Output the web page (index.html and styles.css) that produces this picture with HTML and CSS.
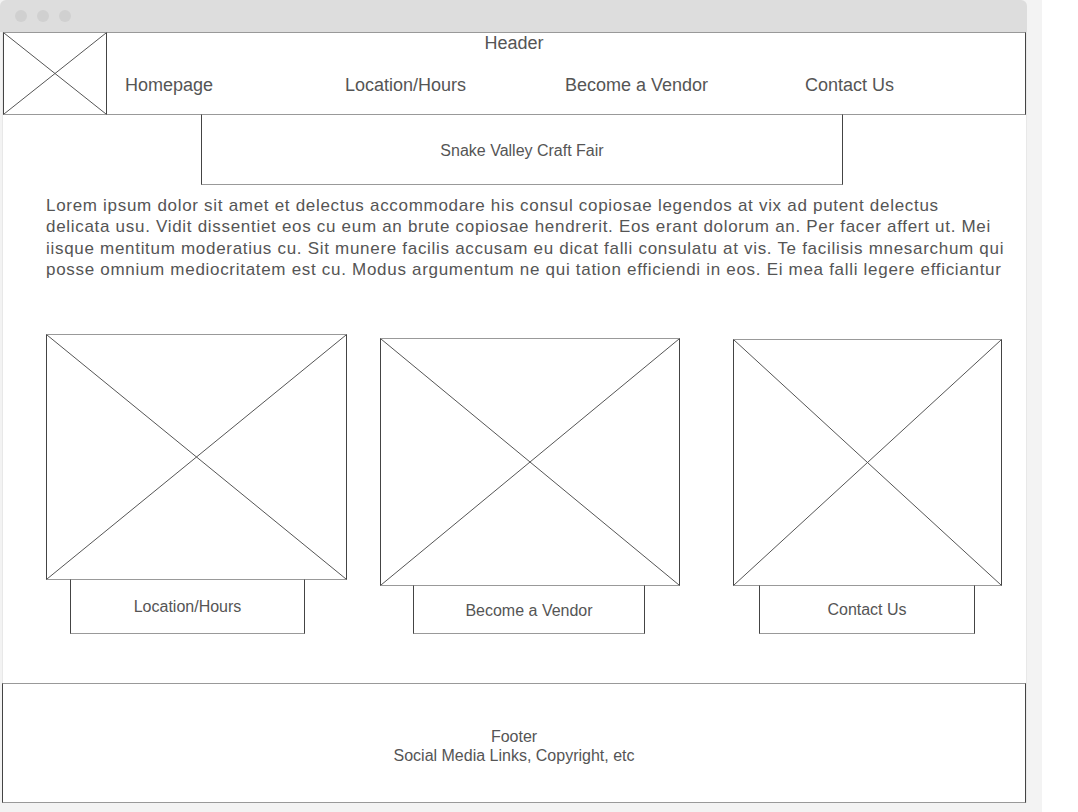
FILE: index.html
```html
<!DOCTYPE html>
<html lang="en">

<head>
  <meta charset="UTF-8" />
  <title>Snake Valley Craft Fair - Wireframe</title>
  <link rel="stylesheet" href="styles.css">
</head>

<body>

  <div class="backdrop">
    <div class="window">
      <div class="titlebar">
        <span class="dot"></span>
        <span class="dot"></span>
        <span class="dot"></span>
      </div>

      <div class="window-body">
        <div class="header">
          <div class="logo">
            <svg class="cross" viewBox="0 0 100 100" preserveAspectRatio="none">
              <line x1="0" y1="0" x2="100" y2="100" />
              <line x1="100" y1="0" x2="0" y2="100" />
            </svg>
          </div>
          <div class="header-main">
            <div class="header-title">Header</div>
            <div class="nav-links">
              <a href="#">Homepage</a>
              <a href="#">Location/Hours</a>
              <a href="#">Become a Vendor</a>
              <a href="#">Contact Us</a>
            </div>
          </div>
        </div>

        <div class="main-content">
          <div class="site-title">Snake Valley Craft Fair</div>

          <p class="intro">
            Lorem ipsum dolor sit amet et delectus accommodare his consul copiosae legendos at vix ad putent delectus<br>
            delicata usu. Vidit dissentiet eos cu eum an brute copiosae hendrerit. Eos erant dolorum an. Per facer affert ut. Mei<br>
            iisque mentitum moderatius cu. Sit munere facilis accusam eu dicat falli consulatu at vis. Te facilisis mnesarchum qui<br>
            posse omnium mediocritatem est cu. Modus argumentum ne qui tation efficiendi in eos. Ei mea falli legere efficiantur
          </p>

          <div class="cards">
            <div class="card card-location">
              <div class="card-img">
                <svg class="cross" viewBox="0 0 100 100" preserveAspectRatio="none">
                  <line x1="0" y1="0" x2="100" y2="100" />
                  <line x1="100" y1="0" x2="0" y2="100" />
                </svg>
              </div>
              <a class="card-label" href="#">Location/Hours</a>
            </div>

            <div class="card card-vendor">
              <div class="card-img">
                <svg class="cross" viewBox="0 0 100 100" preserveAspectRatio="none">
                  <line x1="0" y1="0" x2="100" y2="100" />
                  <line x1="100" y1="0" x2="0" y2="100" />
                </svg>
              </div>
              <a class="card-label" href="#">Become a Vendor</a>
            </div>

            <div class="card card-contact">
              <div class="card-img">
                <svg class="cross" viewBox="0 0 100 100" preserveAspectRatio="none">
                  <line x1="0" y1="0" x2="100" y2="100" />
                  <line x1="100" y1="0" x2="0" y2="100" />
                </svg>
              </div>
              <a class="card-label" href="#">Contact Us</a>
            </div>
          </div>
        </div>

        <footer class="footer">
          <div>Footer</div>
          <div>Social Media Links, Copyright, etc</div>
        </footer>
      </div>
    </div>
  </div>

</body>

</html>
```

FILE: styles.css
```css
body {
  font-family: 'Liberation Sans', Arial, sans-serif;
  color: #555;
  background: #fff;
  margin: 0;
  padding: 0;
}

a {
  color: #555;
  text-decoration: none;
}

.backdrop {
  width: 1042px;
  height: 812px;
  background: #f3f3f3;
}

.window {
  width: 1028px;
}

.titlebar {
  height: 32px;
  width: 1027px;
  background: #dddddd;
  border-radius: 6px 6px 0 0;
  display: flex;
  align-items: center;
  gap: 10px;
  padding-left: 15px;
  box-sizing: border-box;
}

.dot {
  width: 12px;
  height: 12px;
  border-radius: 50%;
  background: #d0d0d0;
}

.window-body {
  margin-left: 2px;
  width: 1025px;
  background: #fff;
  border-left: 1px solid #e8e8e8;
  border-right: 1px solid #e8e8e8;
  box-sizing: border-box;
}

/* boxes of the wireframe: light top/bottom, dark sides */
.header,
.logo,
.site-title,
.card-img,
.card-label,
.footer {
  border: 1px solid;
  border-color: #999 #444 #999 #444;
  box-sizing: border-box;
}

.header {
  display: flex;
  height: 83px;
}

.logo {
  width: 104px;
  margin: -1px 0 -1px -1px;
  height: 83px;
}

.cross {
  display: block;
  width: 100%;
  height: 100%;
}

.cross line {
  stroke: #555;
  stroke-width: 1;
  vector-effect: non-scaling-stroke;
}

.header-main {
  flex: 1;
  position: relative;
}

.header-title {
  position: absolute;
  left: -104px;
  right: 0;
  top: 0;
  text-align: center;
  font-size: 18px;
}

.nav-links {
  display: grid;
  grid-template-columns: 220px 220px 240px auto;
  padding: 42px 0 0 18px;
  font-size: 18px;
}

.main-content {
  height: 569px;
}

.site-title {
  width: 642px;
  height: 71px;
  margin: -1px 0 0 198px;
  padding-top: 2px;
  display: flex;
  align-items: center;
  justify-content: center;
  font-size: 16px;
}

.intro {
  margin: 10px 0 0 43px;
  font-size: 17px;
  letter-spacing: 0.7px;
  line-height: 21.3px;
  white-space: nowrap;
}

.cards {
  display: flex;
  align-items: flex-start;
  padding-left: 43px;
  margin-top: 54px;
}

.card {
  display: flex;
  flex-direction: column;
}

.card-img {
  height: 246px;
}

.card-label {
  display: flex;
  align-items: center;
  justify-content: center;
  margin-top: -1px;
  font-size: 16px;
}

.card-location .card-img {
  width: 301px;
}

.card-location .card-label {
  width: 235px;
  height: 55px;
  margin-left: 24px;
}

.card-vendor {
  margin: 4px 0 0 33px;
}

.card-vendor .card-img {
  width: 300px;
  height: 248px;
}

.card-vendor .card-label {
  width: 232px;
  height: 49px;
  margin-left: 33px;
  padding-top: 2px;
}

.card-contact {
  margin: 5px 0 0 53px;
}

.card-contact .card-img {
  width: 269px;
  height: 247px;
}

.card-contact .card-label {
  width: 216px;
  height: 49px;
  margin-left: 26px;
}

.footer {
  height: 120px;
  margin-left: -1px;
  display: flex;
  flex-direction: column;
  align-items: center;
  justify-content: center;
  font-size: 16px;
  line-height: 19px;
  padding-top: 6px;
}
```
